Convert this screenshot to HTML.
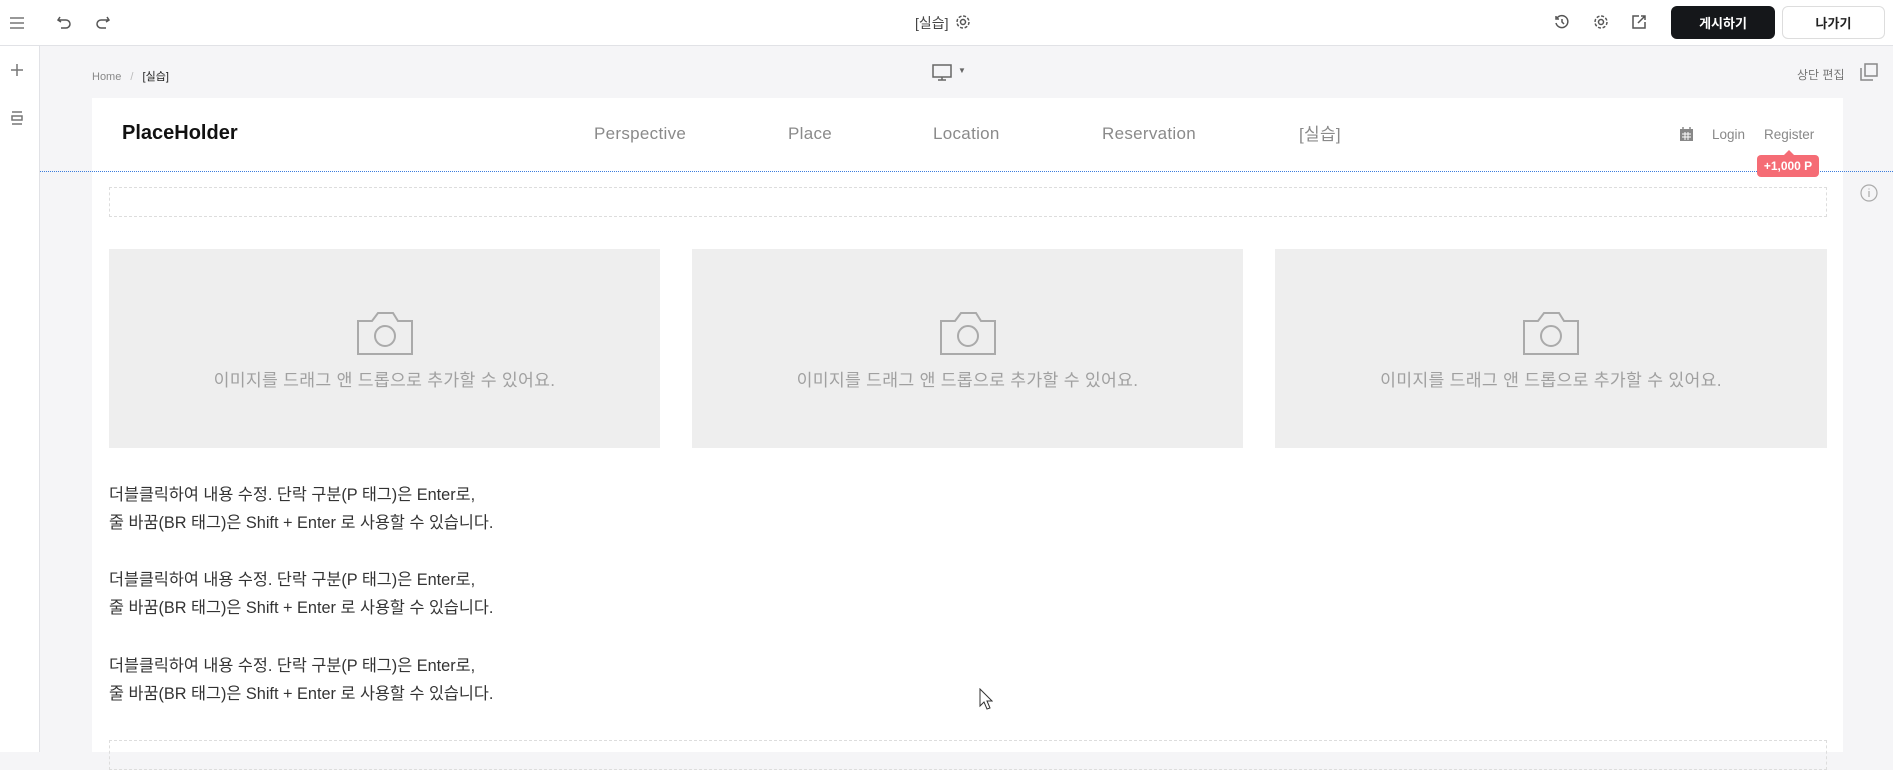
<!DOCTYPE html>
<html><head><meta charset="utf-8">
<style>
*{box-sizing:border-box;margin:0;padding:0}
body{width:1893px;height:752px;overflow:hidden;background:#f5f5f7;font-family:"Liberation Sans","Noto Sans CJK KR",sans-serif;position:relative}
.a{position:absolute}
.top{left:0;top:0;width:1893px;height:46px;background:#fff;border-bottom:1px solid #e1e2e6}
.side{left:0;top:46px;width:40px;height:706px;background:#fff;border-right:1px solid #e1e2e6}
svg{position:absolute;fill:none;stroke:#555;stroke-width:1.5}
.btn{top:6px;height:33px;border-radius:6px;font-size:13px;font-weight:bold;display:flex;align-items:center;justify-content:center}
.page{left:92px;top:98px;width:1751px;height:654px;background:#fff}
.nav{top:124px;font-size:17px;color:#8a8a8a;letter-spacing:.3px}
.card{top:249px;width:551px;height:199px;background:#eeeeee}
.card span{position:absolute;left:0;right:0;top:117px;text-align:center;font-size:17.2px;color:#a0a0a0;letter-spacing:.3px}
.card svg{left:50%;margin-left:-28px;top:62px;stroke:#aaa;stroke-width:2}
.txt{left:109px;font-size:16.3px;color:#333;line-height:28px}
</style></head><body>
<div class="a top"></div>
<div class="a side"></div>
<svg style="left:9px;top:16px" width="16" height="14"><path d="M1 2h14M1 7h14M1 12h14" stroke="#777"/></svg>
<svg style="left:56px;top:14px" width="16" height="16"><path d="M4 3L2 6l3 2M2 6h8a4 4 0 010 8H5"/></svg>
<svg style="left:95px;top:14px" width="16" height="16"><path d="M12 3l2 3-3 2M14 6H6a4 4 0 000 8h5"/></svg>
<div class="a" style="left:915px;top:13px;font-size:14px;color:#444">[실습]</div>
<svg style="left:955px;top:14px" width="16" height="16"><circle cx="8" cy="8" r="2.5"/><circle cx="8" cy="8" r="6" stroke-dasharray="3 1.7"/></svg>
<svg style="left:1554px;top:14px" width="16" height="16"><path d="M3 4a6 6 0 11-1 5M2 2v3h3M8 5v3l2 2"/></svg>
<svg style="left:1593px;top:14px" width="16" height="16"><circle cx="8" cy="8" r="2.5"/><circle cx="8" cy="8" r="6" stroke-dasharray="3 1.7"/></svg>
<svg style="left:1631px;top:14px" width="16" height="16"><path d="M8 2H2v12h12V8M10 2h4v4M14 2L7 9"/></svg>
<div class="a btn" style="left:1671px;width:104px;background:#15171a;color:#fff">게시하기</div>
<div class="a btn" style="left:1782px;width:103px;background:#fff;border:1px solid #ddd;color:#222">나가기</div>
<svg style="left:10px;top:63px" width="14" height="14"><path d="M7 1v12M1 7h12" stroke="#777"/></svg>
<svg style="left:10px;top:111px" width="14" height="14"><path d="M2 1h10M2 13h10M2 5h10v4H2z" stroke="#777"/></svg>
<div class="a" style="left:92px;top:68px;font-size:11px;color:#888">Home <span style="color:#bbb;margin:0 6px">/</span> <span style="color:#222">[실습]</span></div>
<svg style="left:932px;top:64px" width="22" height="18"><rect x="1" y="1" width="18" height="12" stroke="#666"/><path d="M10 13v3M6 16h8" stroke="#666"/></svg>
<div class="a" style="left:958px;top:66px;font-size:8px;color:#666">▼</div>
<div class="a" style="left:1797px;top:66px;font-size:12px;color:#777">상단 편집</div>
<svg style="left:1860px;top:63px" width="18" height="18"><path d="M5 1h12v12H5z M1 5v12h12" stroke="#888"/></svg>
<div class="a page"></div>
<div class="a" style="left:122px;top:122px;font-size:20px;font-weight:bold;color:#111">PlaceHolder</div>
<div class="a nav" style="left:594px">Perspective</div>
<div class="a nav" style="left:788px">Place</div>
<div class="a nav" style="left:933px">Location</div>
<div class="a nav" style="left:1102px">Reservation</div>
<div class="a nav" style="left:1299px;top:120px">[실습]</div>
<svg style="left:1679px;top:126px" width="15" height="16"><rect x="1" y="3" width="13" height="12" fill="#888" stroke="none"/><path d="M4 1v3M11 1v3" stroke="#888"/><path d="M3 8h9M3 11h9M6 6v8M9 6v8" stroke="#fff" stroke-width="1"/></svg>
<div class="a" style="left:1712px;top:127px;font-size:13.5px;color:#888">Login</div>
<div class="a" style="left:1764px;top:127px;font-size:13.5px;color:#888">Register</div>
<div class="a" style="top:171px;width:1853px;height:0;border-top:1px dotted #3b7ddd;left:40px"></div>
<div class="a" style="left:1783px;top:150px;width:0;height:0;border:6px solid transparent;border-bottom-color:#f56c75;border-top:0"></div>
<div class="a" style="left:1757px;top:155px;width:62px;height:22px;background:#f56c75;border-radius:4px;color:#fff;font-size:12px;font-weight:bold;text-align:center;line-height:22px">+1,000 P</div>
<div class="a" style="left:109px;top:187px;width:1718px;height:30px;border:1px dashed #ddd"></div>
<svg style="left:1860px;top:184px" width="18" height="18"><circle cx="9" cy="9" r="8" stroke="#aaa" stroke-width="1.2"/><path d="M9 7v6M9 4.5v1" stroke="#aaa" stroke-width="1.2"/></svg>
<div class="a card" style="left:109px"><svg width="56" height="44"><path d="M1 10h14l6-8h15l5 8h14v33H1z"/><circle cx="28" cy="25" r="10"/></svg><span>이미지를 드래그 앤 드롭으로 추가할 수 있어요.</span></div>
<div class="a card" style="left:692px"><svg width="56" height="44"><path d="M1 10h14l6-8h15l5 8h14v33H1z"/><circle cx="28" cy="25" r="10"/></svg><span>이미지를 드래그 앤 드롭으로 추가할 수 있어요.</span></div>
<div class="a card" style="left:1275px;width:552px"><svg width="56" height="44"><path d="M1 10h14l6-8h15l5 8h14v33H1z"/><circle cx="28" cy="25" r="10"/></svg><span>이미지를 드래그 앤 드롭으로 추가할 수 있어요.</span></div>
<div class="a txt" style="top:481px">더블클릭하여 내용 수정. 단락 구분(P 태그)은 Enter로,<br>줄 바꿈(BR 태그)은 Shift + Enter 로 사용할 수 있습니다.</div>
<div class="a txt" style="top:566px">더블클릭하여 내용 수정. 단락 구분(P 태그)은 Enter로,<br>줄 바꿈(BR 태그)은 Shift + Enter 로 사용할 수 있습니다.</div>
<div class="a txt" style="top:652px">더블클릭하여 내용 수정. 단락 구분(P 태그)은 Enter로,<br>줄 바꿈(BR 태그)은 Shift + Enter 로 사용할 수 있습니다.</div>
<svg style="left:979px;top:688px" width="14" height="22"><path d="M1 1v17l4-4 3 7 3-1-3-7h5z" fill="#fff" stroke="#333" stroke-width="1"/></svg>
<div class="a" style="left:109px;top:740px;width:1718px;height:30px;border:1px dashed #ddd"></div>
</body></html>
